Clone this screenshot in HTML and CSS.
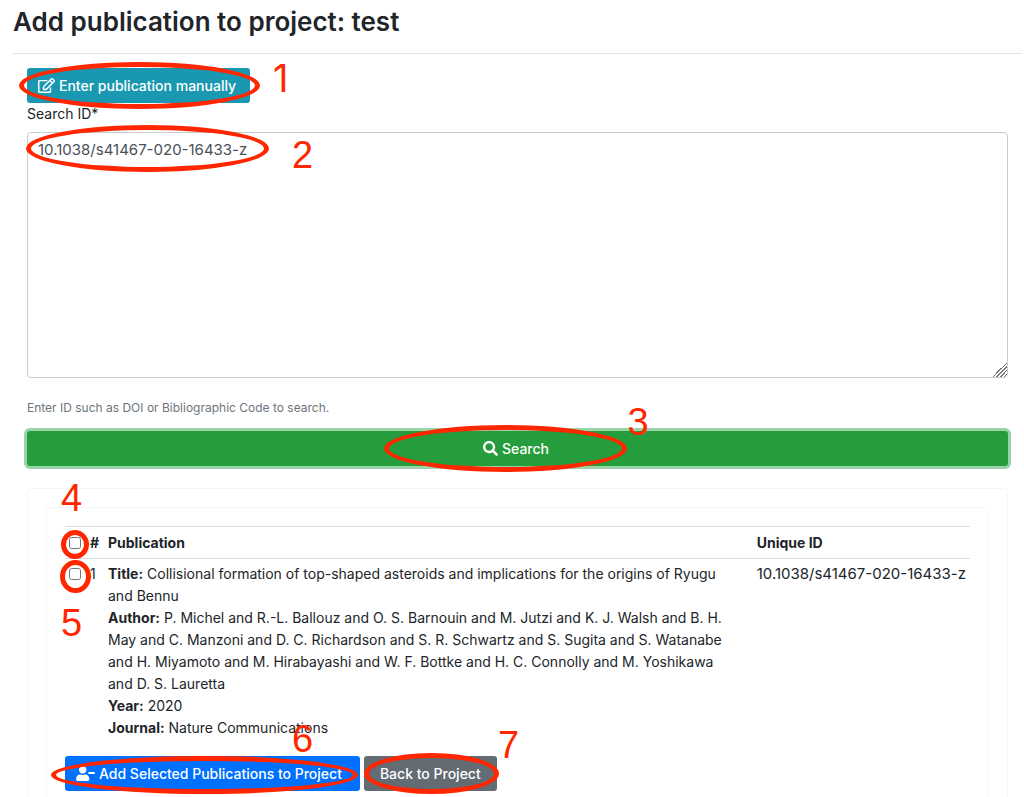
FILE: index.html
```html
<!DOCTYPE html>
<html lang="en">
	<head>
		<meta charset="UTF-8">
		<meta name="viewport" content="width=device-width, initial-scale=1">
		<title>Add publication to project</title>
		<link rel="stylesheet" href="styles.css">
	</head>
	<body>
		<h2>Add publication to project: test</h2>
		<hr>
		<main class="content">
			<form>
				<div class="mark">
					<button type="button" class="btn btn-info">
						<svg class="icon icon-edit" viewBox="0 0 576 512" aria-hidden="true"><path d="M402.3 344.9l32-32c5-5 13.7-1.5 13.7 5.7V464c0 26.5-21.5 48-48 48H48c-26.5 0-48-21.5-48-48V112c0-26.5 21.5-48 48-48h273.5c7.1 0 10.7 8.6 5.7 13.7l-32 32c-1.5 1.5-3.5 2.3-5.7 2.3H48v352h352V350.5c0-2.1.8-4.1 2.3-5.6zm156.6-201.8L296.3 405.7l-90.4 10c-26.2 2.9-48.5-19.2-45.6-45.6l10-90.4L432.9 17.1c22.9-22.9 59.9-22.9 82.7 0l43.2 43.2c22.9 22.9 22.9 60 .1 82.8zM460.1 174L402 115.9 216.2 301.8l-7.3 65.3 65.3-7.3L460.1 174zm64.8-79.7l-43.2-43.2c-4.1-4.1-10.8-4.1-14.8 0L436 82l58.1 58.1 30.9-30.9c4-4.2 4-10.8-.1-14.9z"/></svg>
						Enter publication manually
					</button>
					<span class="ring ring1"></span><span class="num num1">1</span>
				</div>
				<label for="search-id">Search ID*</label>
				<div class="mark field">
					<textarea id="search-id" spellcheck="false">10.1038/s41467-020-16433-z</textarea>
					<span class="ring ring2"></span><span class="num num2">2</span>
				</div>
				<small class="help">Enter ID such as DOI or Bibliographic Code to search.</small>
				<div class="mark search">
					<button type="button" class="btn btn-success">
						<svg class="icon icon-search" viewBox="0 0 512 512" aria-hidden="true"><path d="M505 442.7L405.3 343c-4.5-4.5-10.6-7-17-7H372c27.6-35.3 44-79.7 44-128C416 93.1 322.9 0 208 0S0 93.1 0 208s93.1 208 208 208c48.3 0 92.7-16.4 128-44v16.3c0 6.4 2.5 12.5 7 17l99.7 99.7c9.4 9.4 24.6 9.4 33.9 0l28.3-28.3c9.4-9.4 9.4-24.6.1-34zM208 336c-70.7 0-128-57.2-128-128 0-70.7 57.2-128 128-128 70.7 0 128 57.2 128 128 0 70.7-57.2 128-128 128z"/></svg>
						Search
					</button>
					<span class="ring ring3"></span><span class="num num3">3</span>
				</div>
			</form>
			<div class="card">
				<div class="card">
					<table>
						<thead>
							<tr>
								<th><div class="mark"><input type="checkbox" aria-label="Select all"><span class="ring ring4"></span><span class="num num4">4</span></div></th>
								<th>#</th>
								<th>Publication</th>
								<th>Unique ID</th>
							</tr>
						</thead>
						<tbody>
							<tr>
								<td><div class="mark"><input type="checkbox" aria-label="Select publication 1"><span class="ring ring5"></span><span class="num num5">5</span></div></td>
								<td>1</td>
								<td>
									<b>Title:</b> Collisional formation of top-shaped asteroids and implications for the origins of Ryugu and Bennu<br>
									<b>Author:</b> P. Michel and R.-L. Ballouz and O. S. Barnouin and M. Jutzi and K. J. Walsh and B. H. May and C. Manzoni and D. C. Richardson and S. R. Schwartz and S. Sugita and S. Watanabe and H. Miyamoto and M. Hirabayashi and W. F. Bottke and H. C. Connolly and M. Yoshikawa and D. S. Lauretta<br>
									<b>Year:</b> 2020<br>
									<b>Journal:</b> Nature Communications
								</td>
								<td class="uid">10.1038/s41467-020-16433-z</td>
							</tr>
						</tbody>
					</table>
					<div class="actions">
						<div class="mark">
							<button type="button" class="btn btn-primary">
								<svg class="icon icon-user" viewBox="0 0 640 512" aria-hidden="true"><path d="M624 208H432c-8.8 0-16 7.2-16 16v32c0 8.8 7.2 16 16 16h192c8.8 0 16-7.2 16-16v-32c0-8.8-7.2-16-16-16zm-400 48c70.7 0 128-57.3 128-128S294.7 0 224 0 96 57.3 96 128s57.3 128 128 128zm89.6 32h-16.7c-22.2 10.2-46.9 16-72.9 16s-50.6-5.8-72.9-16h-16.7C60.2 288 0 348.2 0 422.4V464c0 26.5 21.5 48 48 48h352c26.5 0 48-21.5 48-48v-41.6c0-74.2-60.2-134.4-134.4-134.4z"/></svg>
								Add Selected Publications to Project
							</button>
							<span class="ring ring6"></span><span class="num num6">6</span>
						</div>
						<div class="mark">
							<button type="button" class="btn btn-secondary">Back to Project</button>
							<span class="ring ring7"></span><span class="num num7">7</span>
						</div>
					</div>
				</div>
			</div>
		</main>
	</body>
</html>
```
FILE: styles.css
```css
*{
	box-sizing: border-box;
}
body{
	margin:0;
	padding:6px 2px 0 13px;
	font:14px/22px Inter, "Liberation Sans", sans-serif;
	color:#212529;
	background:#fff;
}
h2{
	margin:0;
	font-size:26px;
	line-height:32px;
	font-weight:600;
}
hr{
	margin:15px 0 14px;
	border:0;
	border-top:1px solid #e2e2e3;
}
.content{
	padding:0 14px;
}
label{
	display:block;
}
.btn{
	display:flex;
	align-items:center;
	justify-content:center;
	gap:4px;
	height:35px;
	padding:0 14px 0 11px;
	border:0;
	border-radius:3px;
	font:inherit;
	font-weight:500;
	color:#fff;
	white-space:nowrap;
}
.btn-info{
	background:#1a98b1;
}
.btn-success{
	width:100%;
	background:#269d3c;
	box-shadow:0 0 0 3px #9bd3a8;
}
.btn-primary{
	padding-right:18px;
	background:#0070ff;
}
.btn-secondary{
	padding:0 16px;
	background:#636b73;
}
.icon{
	height:15px;
	fill:currentColor;
}
.icon-edit{
	width:17px;
}
.icon-search{
	width:15px;
}
.icon-user{
	width:19px;
}
.field{
	margin-top:7px;
}
textarea{
	display:block;
	width:100%;
	height:246px;
	padding:6px 10px;
	border:1px solid #c9cdd2;
	border-radius:4px;
	font:inherit;
	font-size:15px;
	color:#495057;
	resize:vertical;
}
textarea::-webkit-resizer{
	background:linear-gradient(135deg, transparent 50%, #777 50%, #777 55%, transparent 55%, transparent 62%, #777 62%, #777 67%, transparent 67%, transparent 75%, #777 75%, #777 80%, transparent 80%, transparent 88%, #777 88%, #777 93%, transparent 93%);
}
.help{
	display:block;
	margin-top:19px;
	font-size:12px;
	color:#6c757d;
}
.search{
	margin:12px 0 22px;
}
.card{
	padding:18px;
	border:1px solid #f6f6f7;
	border-radius:4px;
}
table{
	width:100%;
	border-collapse:collapse;
}
th,td{
	padding:4px;
	text-align:left;
	vertical-align:top;
}
th{
	padding-top:5px;
	border-top:1px solid #dadde0;
	border-bottom:1px solid #dadde0;
	font-weight:700;
}
th:nth-child(1){
	width:21px;
}
th:nth-child(2){
	width:18px;
}
th:nth-child(4){
	width:216px;
}
td:nth-child(3){
	padding-right:24px;
}
.uid{
	font-size:15px;
	white-space:nowrap;
}
input{
	display:block;
	width:12px;
	height:12px;
	margin:5px 0;
}
.actions{
	display:flex;
	gap:4px;
	margin-top:13px;
}

/* numbered step rings over the controls */
.mark{
	position:relative;
}
form .mark:first-child{
	width:max-content;
}
.ring{
	position:absolute;
	border:5px solid #ff2600;
	border-radius:50%;
	pointer-events:none;
}
.num{
	position:absolute;
	font:38px/38px "Liberation Sans", sans-serif;
	color:#ff2600;
	pointer-events:none;
}
.ring1{
	inset:-6px -10px -6px -8px;
}
.num1{
	top:-9px;
	left:246px;
	font-family:Inter, sans-serif;
}
.ring2{
	top:-7px;
	left:-1px;
	width:243px;
	height:47px;
}
.num2{
	top:4px;
	left:265px;
}
.ring3{
	top:-6px;
	left:calc(50% - 134px);
	width:243px;
	height:47px;
}
.num3{
	top:-28px;
	left:calc(50% + 110px);
}
.ring4{
	top:-7px;
	left:-8px;
	width:28px;
	height:29px;
}
.num4{
	top:-58px;
	left:-8px;
}
.ring5{
	top:-8px;
	left:-9px;
	width:31px;
	height:33px;
}
.num5{
	top:36px;
	left:-8px;
}
.ring6{
	inset:0 2px -3px -14px;
}
.num6{
	top:-36px;
	left:227px;
}
.ring7{
	inset:-3px -2px -3px 0;
}
.num7{
	top:-30px;
	left:134px;
}
```
